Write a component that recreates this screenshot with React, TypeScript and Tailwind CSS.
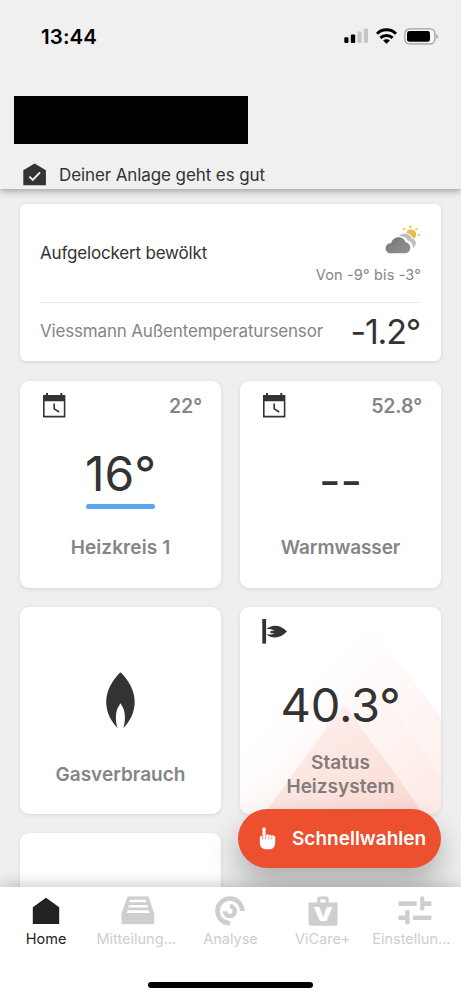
import React from 'react';

const HouseCheckIcon = () => (
  <svg width="24" height="23" viewBox="0 0 24 23" fill="none">
    <path d="M0.3 22.2V7.2L11.6 0.4L22.9 7.2V22.2Z" fill="#333333" />
    <path d="M6.4 13.6L9.8 17L17 9.4" stroke="#f4f4f4" strokeWidth="1.9" />
  </svg>
);

const SignalIcon = () => (
  <svg width="25" height="16" viewBox="0 0 25 16">
    <rect x="0.3" y="9.3" width="4.2" height="5.7" rx="1.2" fill="#000" />
    <rect x="6.8" y="6.6" width="4.4" height="8.4" rx="1.2" fill="#000" />
    <rect x="13.4" y="3.6" width="4.2" height="11.4" rx="1.2" fill="#c6c6c6" />
    <rect x="19.8" y="0.4" width="4.2" height="14.6" rx="1.2" fill="#c6c6c6" />
  </svg>
);

const WifiIcon = () => (
  <svg width="21" height="16" viewBox="0 0 21 16" fill="none" stroke="#000" strokeWidth="2.9">
    <path d="M1 5.7C6.2 0.5 14.8 0.5 20 5.7" />
    <path d="M4.4 9.9C7.7 6.7 13.3 6.7 16.6 9.9" />
    <path d="M7.1 12.6C8.9 10.8 12.1 10.8 13.9 12.6L10.5 15.7Z" fill="#000" stroke="none" />
  </svg>
);

const BatteryIcon = () => (
  <svg width="35" height="17" viewBox="0 0 35 17">
    <rect x="0.9" y="0.9" width="30" height="15" rx="4.6" fill="#f6f6f6" stroke="#9c9c9c" strokeWidth="1.2" />
    <rect x="3" y="3" width="23" height="10.8" rx="2.4" fill="#000" />
    <path d="M32.3 5.9C34.4 6.8 34.4 10 32.3 10.9Z" fill="#9c9c9c" />
  </svg>
);

const WeatherIcon = () => (
  <svg width="36" height="30" viewBox="0 0 36 30">
    <defs>
      <linearGradient id="cloud" x1="0" y1="0" x2="1" y2="1">
        <stop offset="0" stopColor="#747474" />
        <stop offset="0.5" stopColor="#858585" />
        <stop offset="1" stopColor="#919191" />
      </linearGradient>
    </defs>
    <g fill="#e9bf4c">
      <circle cx="26" cy="9.4" r="5.2" />
      <circle cx="19" cy="4.2" r="1.1" />
      <circle cx="25.2" cy="1.7" r="1.2" />
      <circle cx="31.3" cy="4.2" r="1.1" />
      <circle cx="33.8" cy="10.2" r="1.1" />
    </g>
    <path d="M13.5 11C17.5 6 25.5 7.2 27.5 12.8C32.5 14.2 33 20.5 28 24L22 22L14 14Z" fill="#fff" />
    <path d="M14.5 10.8C18 7 24.8 8 26.7 13.5C31.8 14.5 32.4 20.3 28 23.2L22 22L14 14Z" fill="#bbc1bf" />
    <path d="M6 29C-2 29-1.5 17.5 6.3 17C8 9.8 19.5 9.3 22.8 15.6C28.8 17.5 28.8 24.5 26.5 29Z" fill="#fff" />
    <path d="M6 28.2C-1.2 28.2-1.2 18.6 6.3 18C7.8 10.7 18.6 10.2 20.6 17.2C27.2 18 26.8 28.2 19.8 28.2Z" fill="url(#cloud)" />
  </svg>
);

const ScheduleIcon = () => (
  <svg width="23" height="25" viewBox="0 0 23 25" fill="#333333">
    <path fillRule="evenodd" d="M0 2H3V0H5V2H17.3V0H19.3V2H22.4V24.6H0ZM1.6 8.2V22.8H20.8V8.2Z" />
    <path d="M11.2 10.5V15.8L16.2 19" fill="none" stroke="#333333" strokeWidth="1.6" />
  </svg>
);

const FlameIcon = () => (
  <svg width="29" height="57" viewBox="0 0 29 57">
    <path
      d="M14.4 0.3C22 7.5 28.7 18 28.7 30C28.7 41 23.5 50 17.3 56.3C19.2 51 19.6 42 17.6 37.2C16.7 35 15.7 33.5 14.5 31.3C13.3 33.5 12 35.2 11.1 37.5C9.3 43 9.6 51 11.8 56.3C5.5 50 0.2 41 0.2 30C0.2 18 7 7.5 14.4 0.3Z"
      fill="#333333"
    />
  </svg>
);

const BurnerIcon = () => (
  <svg width="26" height="25" viewBox="0 0 26 25" fill="#333333">
    <rect x="0.3" y="0" width="3.8" height="24.6" />
    <path d="M4.1 10.4C9.5 5.4 18.5 5.2 25 12.6C18.5 20 9.5 20 4.1 14.9C7 15.8 9.5 15.7 12.9 14.2H9.3L7.7 13.7L9.5 13.1L7.7 12.3L9.5 11.8H12.8C9.5 9.9 6.8 9.8 4.1 10.4Z" />
  </svg>
);

const HandIcon = () => (
  <svg width="17" height="23" viewBox="0 0 17 23" fill="#fff">
    <path d="M3.5 1.8C3.5-0.2 6.6-0.2 6.6 1.8V8.2H7.2C7.8 7 9.4 7 9.8 8.4C10.6 7.4 12.3 7.8 12.6 9C13.8 8.2 16.2 8.4 16.2 10.6V15.4C16.2 20 13.6 22.3 9.6 22.3H7.8C3 22.3 0.8 19.5 0.8 15.2V11.4C0.8 9.4 2 8.5 3.5 8.5Z" />
    <path d="M3.7 8V12.4M6.7 8V12.6M9.8 8.8V12.6M12.8 9.3V12.6" stroke="#ec502f" strokeWidth="0.6" />
  </svg>
);

const HomeIcon = () => (
  <svg width="28" height="30" viewBox="0 0 28 30">
    <path d="M0.8 28V11.3L14 1.8L27.2 11.3V28Z" fill="#222222" />
  </svg>
);

const InboxIcon = () => (
  <svg width="34" height="30" viewBox="0 0 34 30">
    <path
      fillRule="evenodd"
      d="M6.6 0.5H27.4L33.3 17.5V28.2H0.5V17.5ZM9 3.7L8 6.3H25.5L24.6 3.7ZM8.1 8.9L7.1 11.6H27.2L26.2 8.9ZM6.6 14.2L5.6 16.9H28.5L27.5 14.2Z"
      fill="#cecece"
    />
  </svg>
);

const AnalyseIcon = () => (
  <svg width="30" height="30" viewBox="0 0 30 30" fill="none" stroke="#cecece">
    <path d="M27.3 15A12.4 12.4 0 1 0 14.9 27.3" strokeWidth="4.7" />
    <path d="M14.9 10.3A4.9 4.9 0 1 1 10 15.2" strokeWidth="4.5" />
  </svg>
);

const BagIcon = () => (
  <svg width="30" height="30" viewBox="0 0 30 30">
    <path
      fillRule="evenodd"
      d="M9.3 6.5V3C9.3 1.3 10.3 0.5 12 0.5H18C19.7 0.5 20.7 1.3 20.7 3V6.5H29.5V27.5C29.5 29 28.5 29.8 27 29.8H3C1.5 29.8 0.5 29 0.5 27.5V6.5ZM12.2 3.4V6.5H17.8V3.4Z"
      fill="#cecece"
    />
    <text
      x="15"
      y="25.2"
      textAnchor="middle"
      textLength="19.5"
      lengthAdjust="spacingAndGlyphs"
      fontFamily="Inter, sans-serif"
      fontWeight="900"
      fontSize="19"
      fill="#fff"
    >
      V
    </text>
  </svg>
);

const SlidersIcon = () => (
  <svg width="34" height="30" viewBox="0 0 34 30" fill="#cecece">
    <rect x="0.5" y="5.3" width="18.2" height="4.6" />
    <path d="M22.2 0.5H26.2V5.3H33.3V9.9H26.2V14.3H22.2Z" />
    <path d="M7.3 14.3H11.5V28.3H7.3V24H0.5V19.6H7.3Z" />
    <rect x="15" y="19.6" width="18.3" height="4.4" />
  </svg>
);

const NAV_ITEMS = [
  { label: 'Home', icon: <HomeIcon />, color: 'text-[#222222]', nudge: '' },
  { label: 'Mitteilung...', icon: <InboxIcon />, color: 'text-[#cecece]', nudge: 'mr-1' },
  { label: 'Analyse', icon: <AnalyseIcon />, color: 'text-[#cecece]', nudge: '' },
  { label: 'ViCare+', icon: <BagIcon />, color: 'text-[#cecece]', nudge: '' },
  { label: 'Einstellun...', icon: <SlidersIcon />, color: 'text-[#cecece]', nudge: 'mr-[7px]' },
];

const Tile: React.FC<{ children?: React.ReactNode }> = ({ children }) => (
  <div className="relative h-[206.5px] overflow-hidden rounded-[9px] bg-white shadow-[0_1px_4px_rgba(0,0,0,0.1)]">
    {children}
  </div>
);

const TileHead: React.FC<{ value: string }> = ({ value }) => (
  <div className="flex h-[38px] items-start justify-between pt-3 pl-[23px] pr-[19px]">
    <ScheduleIcon />
    <span className="text-[19.5px] leading-[26px] font-semibold tracking-[-0.1px] text-[#858585]">{value}</span>
  </div>
);

const App: React.FC = () => {
  return (
    <div className="relative flex h-[998px] w-[461px] flex-col overflow-hidden bg-[#efefef] font-['Inter',sans-serif] text-[#333333]">
      <header className="relative z-10 h-[189px] shrink-0 bg-[#f0f0f0] shadow-[0_2px_7px_rgba(0,0,0,0.35)]">
        <div className="flex h-[72px] items-center justify-between pl-[41px] pr-[22px]">
          <span className="pt-0.5 text-[20.5px] font-semibold tracking-[0.1px] text-black">13:44</span>
          <div className="flex items-center gap-[7px]">
            <SignalIcon />
            <WifiIcon />
            <BatteryIcon />
          </div>
        </div>
        <div className="mt-6 ml-[14px] h-[48px] w-[234px] bg-black" />
        <div className="mt-[19px] flex items-center gap-3 pl-[23px]">
          <HouseCheckIcon />
          <span className="pt-px text-[17px] leading-[22px] tracking-[-0.1px]">Deiner Anlage geht es gut</span>
        </div>
      </header>

      <main className="min-h-0 flex-1 overflow-hidden pt-[15px] pr-5 pl-5">
        <section className="h-[157px] rounded-md bg-white px-5 shadow-[0_1px_4px_rgba(0,0,0,0.12)]">
          <div className="flex h-[99px] justify-between border-b border-[#e8e8e8]">
            <span className="mt-[37px] text-[17px] leading-6 tracking-[-0.18px]">Aufgelockert bewölkt</span>
            <div className="flex flex-col items-end pt-[21px]">
              <WeatherIcon />
              <span className="mt-[10px] text-[14.5px] leading-5 tracking-[0.15px] text-[#858585]">Von -9° bis -3°</span>
            </div>
          </div>
          <div className="flex h-[57px] items-center justify-between">
            <span className="pt-px text-[17px] tracking-[-0.17px] text-[#858585]">Viessmann Außentemperatursensor</span>
            <span className="pr-px text-[34px] tracking-[-1.2px]">-1.2°</span>
          </div>
        </section>

        <div className="mt-5 grid grid-cols-[201px_201px] gap-x-[19px] gap-y-[19.5px]">
          <Tile>
            <TileHead value="22°" />
            <div className="mt-[25px] text-center text-[48px] leading-[60px]">16°</div>
            <div className="mx-auto h-[5px] w-[69px] rounded-full bg-[#5aa5ee]" />
            <div className="mt-[27px] text-center text-[19px] leading-6 font-semibold tracking-[0.1px] text-[#858585]">
              Heizkreis 1
            </div>
          </Tile>
          <Tile>
            <TileHead value="52.8°" />
            <div className="mt-[32px] text-center text-[47px] leading-[60px]">--</div>
            <div className="mt-[25px] text-center text-[19px] leading-6 font-semibold tracking-[-0.1px] text-[#858585]">
              Warmwasser
            </div>
          </Tile>
          <Tile>
            <div className="flex justify-center pt-[65px]">
              <FlameIcon />
            </div>
            <div className="mt-[34px] text-center text-[19px] leading-6 font-semibold text-[#858585]">Gasverbrauch</div>
          </Tile>
          <Tile>
            <svg className="absolute inset-0" width="201" height="207" viewBox="0 0 201 207">
              <defs>
                <linearGradient id="glow" gradientUnits="userSpaceOnUse" x1="80" y1="60" x2="201" y2="180">
                  <stop offset="0" stopColor="#ef8068" stopOpacity="0" />
                  <stop offset="1" stopColor="#ef8068" stopOpacity="0.12" />
                </linearGradient>
                <linearGradient id="peak" x1="0" y1="0" x2="0" y2="1">
                  <stop offset="0" stopColor="#ef8068" stopOpacity="0.1" />
                  <stop offset="1" stopColor="#ef8068" stopOpacity="0.16" />
                </linearGradient>
              </defs>
              <path d="M0 135L133 22L201 110V207H0Z" fill="url(#glow)" />
              <path d="M0 190L135 76L201 170V207H0Z" fill="url(#glow)" opacity="0.35" />
              <path d="M24 207L104 97L184 207Z" fill="url(#peak)" />
            </svg>
            <div className="relative pt-3 pl-[22px]">
              <BurnerIcon />
            </div>
            <div className="relative mt-[31px] text-center text-[47px] leading-[60px] tracking-[-0.2px]">40.3°</div>
            <div className="relative mt-[16px] text-center text-[19px] leading-[23.5px] font-semibold text-[#857b7a]">
              Status
              <br />
              Heizsystem
            </div>
          </Tile>
          <Tile />
        </div>
      </main>

      <button className="absolute top-[809px] left-[238px] flex h-[58.5px] w-[203px] items-center rounded-full bg-[#ec502f] pl-[21px] text-white shadow-[0_16px_30px_rgba(0,0,0,0.27)]">
        <HandIcon />
        <span className="ml-4 pt-0.5 text-[19px] font-semibold whitespace-nowrap">Schnellwahlen</span>
      </button>

      <nav className="relative z-10 h-[111px] shrink-0 bg-white shadow-[0_-2px_14px_rgba(0,0,0,0.22)]">
        <div className="grid grid-cols-5 pt-[9px]">
          {NAV_ITEMS.map((item) => (
            <div key={item.label} className={`flex flex-col items-center ${item.color}`}>
              {item.icon}
              <span className={`mt-[3px] text-[14.5px] leading-5 whitespace-nowrap ${item.nudge}`}>{item.label}</span>
            </div>
          ))}
        </div>
        <div className="mx-auto mt-[33px] h-[6px] w-[165px] rounded-full bg-black" />
      </nav>
    </div>
  );
};

export default App;
